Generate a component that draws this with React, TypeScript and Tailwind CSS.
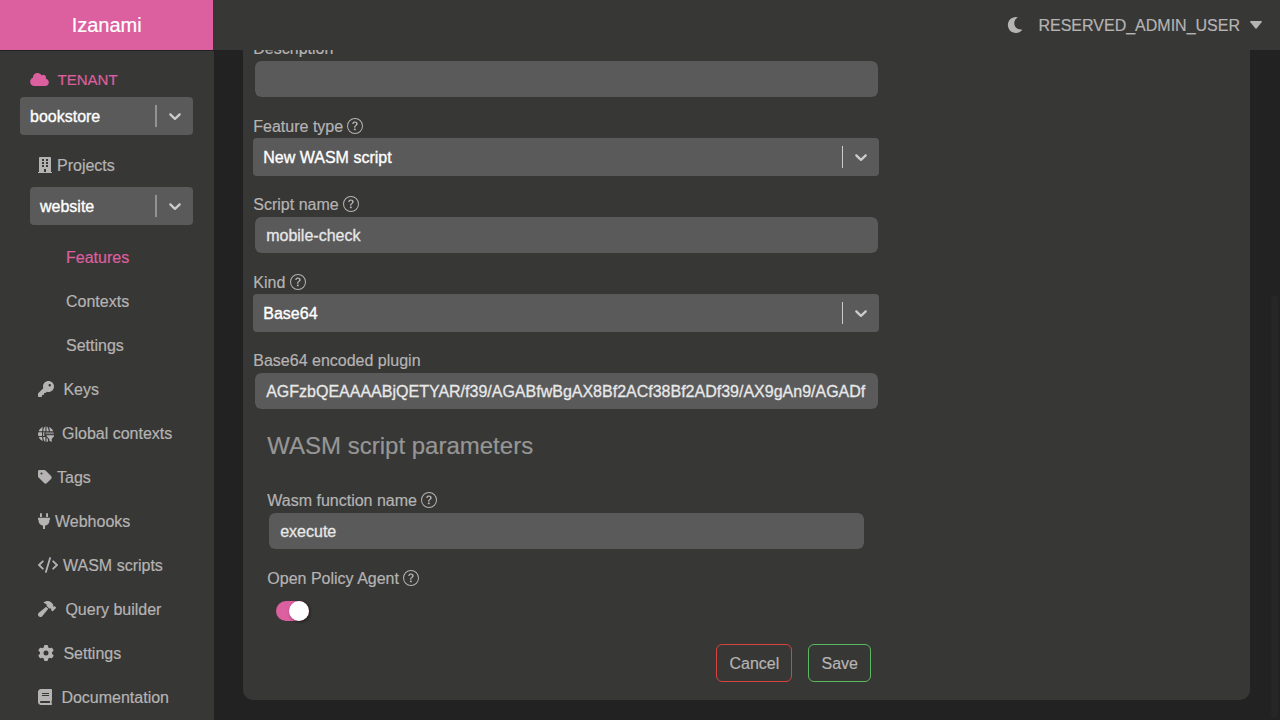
import type { ReactNode } from "react";
import { FaBook, FaBuilding, FaCloud, FaMoon } from "react-icons/fa";
import { FaGear, FaHammer, FaKey, FaTag } from "react-icons/fa6";
import { BsQuestionCircle } from "react-icons/bs";

function Chevron() {
  return (
    <svg className="size-5 shrink-0 fill-[#cccccc]" viewBox="0 0 20 20">
      <path d="M4.516 7.548c0.436-0.446 1.043-0.481 1.576 0l3.908 3.747 3.908-3.747c0.533-0.481 1.141-0.446 1.574 0 0.436 0.445 0.408 1.197 0 1.615-0.406 0.418-4.695 4.502-4.695 4.502-0.217 0.223-0.502 0.335-0.787 0.335s-0.57-0.112-0.789-0.335c0 0-4.287-4.084-4.695-4.502s-0.436-1.17 0-1.615z" />
    </svg>
  );
}

function PlugIcon() {
  return (
    <svg className="h-4 w-3 shrink-0" viewBox="0 0 12 16" fill="currentColor">
      <path d="M2 .2H3.900V4H2ZM8.100.2H10V4H8.100ZM.3 4.800H11.700Q12 4.800 12 5.200V6.500Q12 6.900 11.500 6.900C11.500 10.200 9.800 12 7 12.800V16H5V12.800C2.200 12 .5 10.200.5 6.900Q0 6.900 0 6.500V5.200Q0 4.800.3 4.800Z" />
    </svg>
  );
}

function CodeIcon() {
  return (
    <svg className="h-4 w-5 shrink-0" viewBox="0 0 20 16" fill="none" stroke="currentColor" strokeWidth="1.800" strokeLinecap="round" strokeLinejoin="round">
      <path d="M4.800 4.300L1 8L4.800 11.700M15.200 4.300L19 8L15.200 11.700M12.100 1L7.900 15" />
    </svg>
  );
}

function GlobeFilter() {
  return (
    <svg className="mt-0.5 size-4 shrink-0" viewBox="0 0 16 16">
      <g fill="currentColor">
        <path d="M4.9 1C2.9 1.8 1.4 3.300.7 5.200H4.100C4.300 3.600 4.500 2.200 4.900 1Z" />
        <path d="M7.400.2C6.200.8 5.400 2.600 5.200 5.200H7.400Z" />
        <path d="M8.500.2V5.200H10.800C10.500 2.600 9.700.8 8.500.2Z" />
        <path d="M11 1C11.500 2.200 11.800 3.600 11.900 5.200H15.200C14.500 3.300 13 1.800 11 1Z" />
        <path d="M.3 6.300H4V9.900H.3C0 8.700 0 7.500.3 6.300Z" />
        <path d="M5.100 6.300H6.300V9.900H5.100Z" />
        <path d="M.7 11H4.100C4.300 12.500 4.500 13.900 4.900 15C2.900 14.300 1.400 12.900.7 11Z" />
        <path d="M5.200 11H7.400V15.900C6.200 15.300 5.400 13.500 5.200 11Z" />
        <path d="M8.500 11.500L10 13.200V15.200C9.500 15.700 9 15.900 8.500 15.900Z" />
        <path d="M8.600 9.300H16V10.300L13.700 12.900V16L11.300 14.800V12.900L8.600 10.300Z" />
      </g>
      <path d="M7.500 6.300H15.700V8.200H7.500Z" fill="currentColor" opacity=".6" />
    </svg>
  );
}

function SideSelect({ value, className }: { value: string; className: string }) {
  return (
    <div className={`mr-[20.6px] flex h-[38px] items-center rounded-[4px] bg-[#5a5a5a] pr-2 pl-2.5 text-white ${className}`}>
      <span className="flex-1 pt-0.5 [-webkit-text-stroke:0.35px]">{value}</span>
      <span className="mr-2 h-[22px] w-0.5 bg-[#939393]" />
      <Chevron />
    </div>
  );
}

function NavItem({ icon, gap, children }: { icon: ReactNode; gap: string; children: string }) {
  return (
    <a className={`flex h-11 items-center pl-[38px] ${gap}`}>
      {icon}
      <span className="pt-0.5">{children}</span>
    </a>
  );
}

function SubItem({ active, children }: { active?: boolean; children: string }) {
  return (
    <a className={`flex h-11 items-center pt-0.5 pl-[66px] ${active ? "text-[#dc5f9f]" : ""}`}>{children}</a>
  );
}

function Field({ label, help, children }: { label: string; help?: boolean; children: ReactNode }) {
  return (
    <div className="mb-4">
      <div className="flex h-6 items-center gap-[4.2px]">
        <span className="pt-0.5">{label}</span>
        {help && <BsQuestionCircle className="size-4" />}
      </div>
      {children}
    </div>
  );
}

function TextBox({ value }: { value: string }) {
  return (
    <div className="ml-[0.5px] flex h-[38px] items-center rounded-[7px] border border-[#373735] bg-[#5a5a5a] bg-clip-padding pr-3 pl-[11.4px] whitespace-nowrap text-[#e8e8e8]">
      <span className="block pt-0.5 [-webkit-text-stroke:0.3px]">{value}</span>
    </div>
  );
}

function SelectBox({ value }: { value: string }) {
  return (
    <div className="flex h-[38px] items-center rounded-[4px] bg-[#5a5a5a] pr-2 pl-2.5 text-white">
      <span className="flex-1 pt-0.5 [-webkit-text-stroke:0.35px]">{value}</span>
      <span className="mr-2 h-[22px] w-px bg-[#cccccc]" />
      <Chevron />
    </div>
  );
}

export default function App() {
  return (
    <div className="flex h-[720px] w-[1280px] flex-col overflow-hidden bg-[#222222] font-['Liberation_Sans',Arial,sans-serif] text-base leading-6 text-[#b5b3b3] [-webkit-text-stroke:0.2px]">
      <header className="flex h-[50px] shrink-0 bg-[#373735]">
        <div className="flex w-[213.4px] items-center justify-center bg-[#dc5f9f] text-xl text-white">Izanami</div>
        <div className="flex flex-1 items-center justify-end pr-[18px]">
          <FaMoon className="mr-[15.5px] size-4" />
          <span className="pt-0.5">RESERVED_ADMIN_USER</span>
          <svg className="ml-2.5 h-2 w-3" viewBox="0 0 12 8">
            <path d="M.8 0H11.200Q12.300.3 11.600 1.200L6.600 7.400Q6 8 5.400 7.400L.4 1.200Q-.3.3.8 0Z" fill="currentColor" />
          </svg>
        </div>
      </header>

      <div className="flex min-h-0 flex-1">
        <nav className="w-[214px] shrink-0 border-t border-[#222222] bg-[#373735] pt-[11px]">
          <div className="flex h-[35px] items-center gap-[8.6px] pl-[30px] text-[15px] text-[#dc5f9f]">
            <FaCloud className="h-[15px] w-[19px]" />
            <span>TENANT</span>
          </div>
          <SideSelect value="bookstore" className="mb-2 ml-5" />
          <NavItem icon={<FaBuilding className="h-4 w-3.5" />} gap="gap-[5px]">Projects</NavItem>
          <SideSelect value="website" className="mb-2.5 ml-[30px]" />
          <SubItem active>Features</SubItem>
          <SubItem>Contexts</SubItem>
          <SubItem>Settings</SubItem>
          <NavItem icon={<FaKey className="size-4" />} gap="gap-[9.4px]">Keys</NavItem>
          <NavItem icon={<GlobeFilter />} gap="gap-2">Global contexts</NavItem>
          <NavItem icon={<FaTag className="h-4 w-3.5" />} gap="gap-[5px]">Tags</NavItem>
          <NavItem icon={<PlugIcon />} gap="gap-[5px]">Webhooks</NavItem>
          <NavItem icon={<CodeIcon />} gap="gap-[5px]">WASM scripts</NavItem>
          <NavItem icon={<FaHammer className="h-4 w-[18px]" />} gap="gap-[9.4px]">Query builder</NavItem>
          <NavItem icon={<FaGear className="size-4" />} gap="gap-[9.4px]">Settings</NavItem>
          <NavItem icon={<FaBook className="h-4 w-3.5" />} gap="gap-[9.4px]">Documentation</NavItem>
        </nav>

        <main className="flex min-w-0 flex-1 justify-between pr-0.5 pl-[29.3px]">
          <section className="h-[650px] w-[1006.7px] overflow-hidden rounded-b-[10px] bg-[#373735] pl-2.5">
            <div className="-mt-3.5 w-[625.7px]">
              <Field label="Description"><TextBox value="" /></Field>
              <Field label="Feature type" help><SelectBox value="New WASM script" /></Field>
              <Field label="Script name" help><TextBox value="mobile-check" /></Field>
              <Field label="Kind" help><SelectBox value="Base64" /></Field>
              <Field label="Base64 encoded plugin">
                <TextBox value="AGFzbQEAAAABjQETYAR/f39/AGABfwBgAX8Bf2ACf38Bf2ADf39/AX9gAn9/AGADf" />
              </Field>
              <div className="px-3.5 pt-[5px]">
                <h4 className="mb-[27px] text-2xl leading-[30px] text-[#969696]">WASM script parameters</h4>
                <Field label="Wasm function name" help><TextBox value="execute" /></Field>
                <Field label="Open Policy Agent" help>
                  <div className="mt-[11px] ml-[9px] flex h-5 w-[33px] justify-end rounded-full bg-[#dc5f9f]">
                    <span className="size-5 rounded-full bg-white shadow-[1px_1px_3px_rgba(0,0,0,0.5)]" />
                  </div>
                </Field>
              </div>
              <div className="flex justify-end gap-4 pt-[7px] pr-2">
                <button className="h-[38px] w-[76px] rounded-md border border-[#d5443f] pt-0.5">Cancel</button>
                <button className="h-[38px] w-[62.6px] rounded-md border border-[#5cb85c] pt-0.5">Save</button>
              </div>
            </div>
          </section>
          <div className="mt-[245px] h-[423px] w-[7px] rounded-full bg-[#262626]" />
        </main>
      </div>
    </div>
  );
}
